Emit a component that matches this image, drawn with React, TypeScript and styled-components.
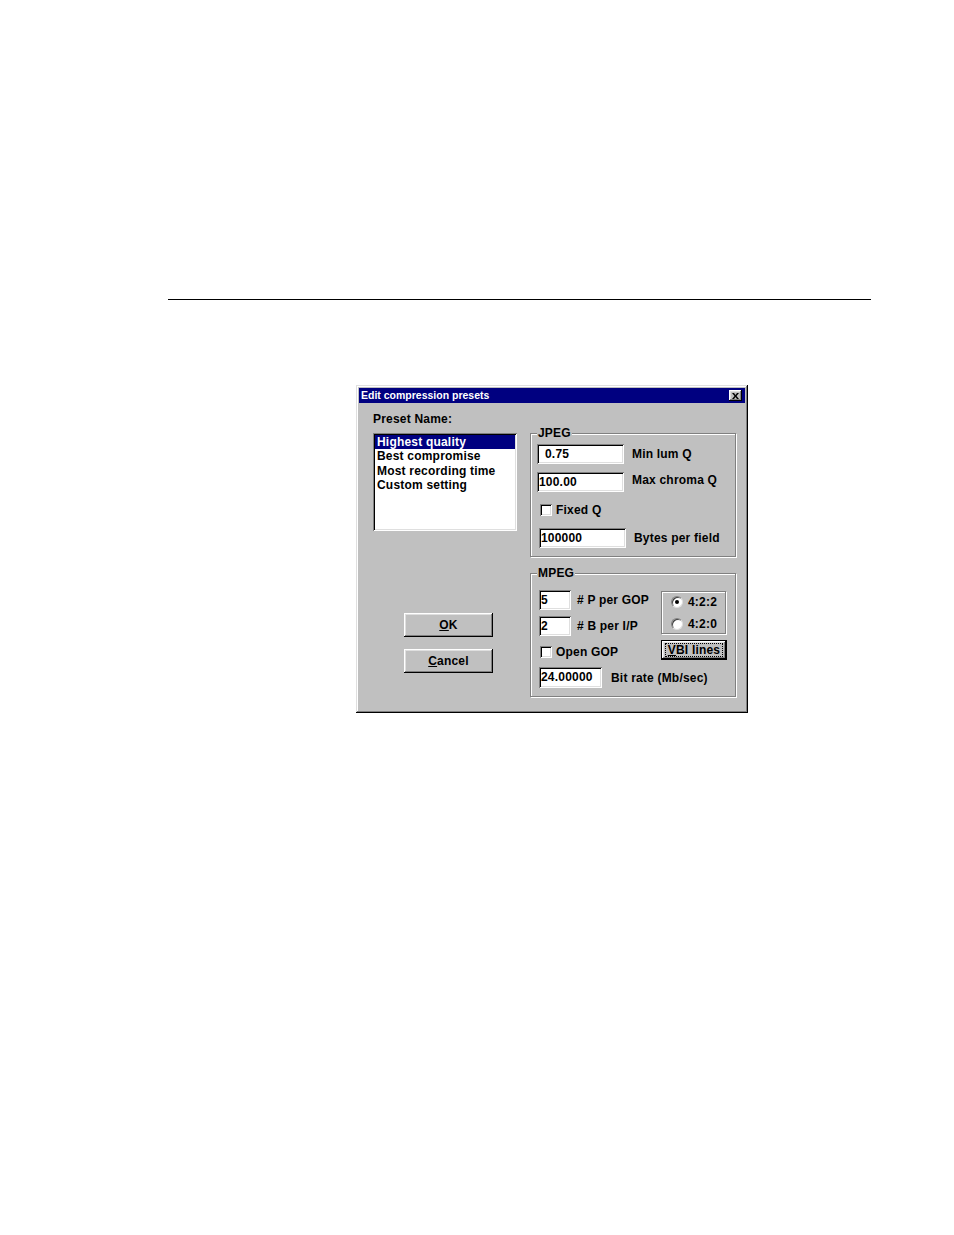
import React from "react";
import styled, { createGlobalStyle } from "styled-components";

const GlobalStyle = createGlobalStyle`
  html, body {
    margin: 0;
    padding: 0;
    background: #fff;
  }
  body {
    font-family: "Liberation Sans", Arial, sans-serif;
  }
`;

const raised = `
  box-shadow: inset -1px -1px 0 #000, inset 1px 1px 0 #fff,
    inset -2px -2px 0 #808080, inset 2px 2px 0 #dfdfdf;
`;

const sunken = `
  box-shadow: inset 1px 1px 0 #808080, inset -1px -1px 0 #fff,
    inset 2px 2px 0 #000, inset -2px -2px 0 #dfdfdf;
`;

const etched = `
  border: 1px solid #808080;
  box-shadow: inset 1px 1px 0 #fff, 1px 1px 0 #fff;
`;

const Page = styled.div`
  width: 954px;
  height: 1235px;
  box-sizing: border-box;
  padding-top: 299px;
  display: flex;
  flex-direction: column;
`;

const Rule = styled.hr`
  margin: 0 0 0 168px;
  width: 703px;
  height: 1px;
  border: none;
  background: #000;
`;

const Window = styled.div`
  margin: 85px 0 0 356px;
  width: 392px;
  height: 328px;
  box-sizing: border-box;
  padding: 3px;
  background: #c0c0c0;
  color: #000;
  font: bold 12px/14px "Liberation Sans", Arial, sans-serif;
  letter-spacing: 0.2px;
  box-shadow: inset -1px -1px 0 #000, inset 1px 1px 0 #dfdfdf,
    inset -2px -2px 0 #808080, inset 2px 2px 0 #fff;
`;

const TitleBar = styled.div`
  height: 15px;
  display: flex;
  align-items: center;
  justify-content: space-between;
  padding: 0 3px 0 2px;
  background: #000080;
  color: #fff;
  font-size: 10.5px;
  line-height: 15px;
  letter-spacing: 0;
`;

const CloseButton = styled.span`
  width: 13px;
  height: 11px;
  display: flex;
  align-items: center;
  justify-content: center;
  background: #c0c0c0;
  ${raised}
`;

const Body = styled.div`
  display: grid;
  grid-template-columns: 144px 206px;
  column-gap: 13px;
  padding-left: 14px;
`;

const LeftColumn = styled.div`
  display: flex;
  flex-direction: column;
  align-items: flex-start;
  padding-top: 9px;
`;

const FieldLabel = styled.span`
  height: 14px;
  white-space: nowrap;
`;

const ListBox = styled.div`
  margin-top: 7px;
  width: 144px;
  height: 98px;
  box-sizing: border-box;
  padding: 2px;
  background: #fff;
  ${sunken}
`;

const ListItem = styled.div<{ $selected?: boolean }>`
  height: 14.3px;
  line-height: 15px;
  padding-left: 2px;
  white-space: nowrap;
  background: ${(p) => (p.$selected ? "#000080" : "transparent")};
  color: ${(p) => (p.$selected ? "#fff" : "#000")};
`;

const Button = styled.button<{ $top: number; $w: number; $h: number }>`
  margin-top: ${(p) => p.$top}px;
  width: ${(p) => p.$w}px;
  height: ${(p) => p.$h}px;
  padding: 0;
  border: none;
  background: #c0c0c0;
  color: #000;
  font: bold 12px/14px "Liberation Sans", Arial, sans-serif;
  letter-spacing: 0.2px;
  display: flex;
  align-items: center;
  justify-content: center;
  ${raised}
`;

const DialogButton = styled(Button)`
  margin-left: 31px;
`;

const DefaultButton = styled(Button)`
  border: 1px solid #000;
`;

const FocusRing = styled.span`
  border: 1px dotted #000;
  padding: 0 2px;
  line-height: 12px;
`;

const Key = styled.u`
  text-decoration: underline;
`;

const RightColumn = styled.div`
  display: flex;
  flex-direction: column;
  padding-top: 30px;
`;

const Group = styled.div<{ $top?: number }>`
  position: relative;
  margin-top: ${(p) => p.$top ?? 0}px;
  width: 206px;
  height: 124px;
  box-sizing: border-box;
  ${etched}
`;

const Caption = styled.span`
  position: absolute;
  top: -8px;
  left: 6px;
  padding: 0 1px;
  background: #c0c0c0;
`;

const Row = styled.div<{ $top?: number; $left?: number }>`
  display: flex;
  align-items: center;
  margin-top: ${(p) => p.$top ?? 0}px;
  padding-left: ${(p) => p.$left ?? 0}px;
`;

const TextBox = styled.div<{ $w: number; $h?: number; $indent?: number }>`
  width: ${(p) => p.$w}px;
  height: ${(p) => p.$h ?? 20}px;
  line-height: ${(p) => p.$h ?? 20}px;
  box-sizing: border-box;
  padding-left: ${(p) => p.$indent ?? 4}px;
  background: #fff;
  white-space: nowrap;
  ${sunken}
`;

const Caption2 = styled.span<{ $gap: number; $lift?: number }>`
  margin-left: ${(p) => p.$gap}px;
  margin-bottom: ${(p) => p.$lift ?? 0}px;
  white-space: nowrap;
`;

const CheckBox = styled.span`
  width: 12px;
  height: 12px;
  box-sizing: border-box;
  background: #fff;
  ${sunken}
`;

const TopPart = styled.div`
  display: flex;
  padding: 16px 0 0 8px;
`;

const FieldColumn = styled.div`
  width: 122px;
  display: flex;
  flex-direction: column;
`;

const SideColumn = styled.div`
  margin-top: 1px;
  display: flex;
  flex-direction: column;
`;

const RadioBox = styled.div`
  width: 65px;
  height: 43px;
  box-sizing: border-box;
  padding: 3px 0 0 9px;
  display: flex;
  flex-direction: column;
  gap: 8px;
  ${etched}
`;

const RadioRow = styled.div`
  height: 14px;
  display: flex;
  align-items: center;
`;

const RadioDot = styled.span<{ $on?: boolean }>`
  position: relative;
  width: 12px;
  height: 12px;
  box-sizing: border-box;
  border-radius: 50%;
  background: #fff;
  border: 1px solid;
  border-color: #808080 #dfdfdf #dfdfdf #808080;
  box-shadow: inset 1px 1px 0 #404040;
  &::after {
    content: "";
    display: ${(p) => (p.$on ? "block" : "none")};
    position: absolute;
    left: 3px;
    top: 3px;
    width: 4px;
    height: 4px;
    border-radius: 50%;
    background: #000;
  }
`;

const presets = ["Highest quality", "Best compromise", "Most recording time", "Custom setting"];

export default function App() {
  return (
    <>
      <GlobalStyle />
      <Page>
        <Rule />
        <Window>
          <TitleBar>
            <span>Edit compression presets</span>
            <CloseButton>
              <svg width="7" height="6" viewBox="0 0 7 6">
                <path d="M0 0h2l1.5 2L5 0h2L4.5 3 7 6H5L3.5 4 2 6H0l2.5-3z" fill="#000" />
              </svg>
            </CloseButton>
          </TitleBar>
          <Body>
            <LeftColumn>
              <FieldLabel>Preset Name:</FieldLabel>
              <ListBox>
                {presets.map((name, i) => (
                  <ListItem key={name} $selected={i === 0}>
                    {name}
                  </ListItem>
                ))}
              </ListBox>
              <DialogButton $top={82} $w={89} $h={24}>
                <span>
                  <Key>O</Key>K
                </span>
              </DialogButton>
              <DialogButton $top={12} $w={89} $h={24}>
                <span>
                  <Key>C</Key>ancel
                </span>
              </DialogButton>
            </LeftColumn>

            <RightColumn>
              <Group>
                <Caption>JPEG</Caption>
                <Row $top={10} $left={6}>
                  <TextBox $w={87} $indent={8}>0.75</TextBox>
                  <Caption2 $gap={8}>Min lum Q</Caption2>
                </Row>
                <Row $top={8} $left={6}>
                  <TextBox $w={87} $indent={2}>100.00</TextBox>
                  <Caption2 $gap={8} $lift={4}>Max chroma Q</Caption2>
                </Row>
                <Row $top={11} $left={9}>
                  <CheckBox />
                  <Caption2 $gap={4}>Fixed Q</Caption2>
                </Row>
                <Row $top={11} $left={8}>
                  <TextBox $w={87} $indent={2}>100000</TextBox>
                  <Caption2 $gap={8}>Bytes per field</Caption2>
                </Row>
              </Group>

              <Group $top={16}>
                <Caption>MPEG</Caption>
                <TopPart>
                  <FieldColumn>
                    <Row>
                      <TextBox $w={32} $indent={2}>5</TextBox>
                      <Caption2 $gap={6}># P per GOP</Caption2>
                    </Row>
                    <Row $top={6}>
                      <TextBox $w={32} $indent={2}>2</TextBox>
                      <Caption2 $gap={6}># B per I/P</Caption2>
                    </Row>
                    <Row $top={9} $left={1}>
                      <CheckBox />
                      <Caption2 $gap={4}>Open GOP</Caption2>
                    </Row>
                  </FieldColumn>
                  <SideColumn>
                    <RadioBox>
                      <RadioRow>
                        <RadioDot $on />
                        <Caption2 $gap={5}>4:2:2</Caption2>
                      </RadioRow>
                      <RadioRow>
                        <RadioDot />
                        <Caption2 $gap={5}>4:2:0</Caption2>
                      </RadioRow>
                    </RadioBox>
                    <DefaultButton $top={6} $w={66} $h={20}>
                      <FocusRing>
                        <Key>V</Key>BI lines
                      </FocusRing>
                    </DefaultButton>
                  </SideColumn>
                </TopPart>
                <Row $top={7} $left={8}>
                  <TextBox $w={63} $h={21} $indent={2}>24.00000</TextBox>
                  <Caption2 $gap={9}>Bit rate (Mb/sec)</Caption2>
                </Row>
              </Group>
            </RightColumn>
          </Body>
        </Window>
      </Page>
    </>
  );
}
